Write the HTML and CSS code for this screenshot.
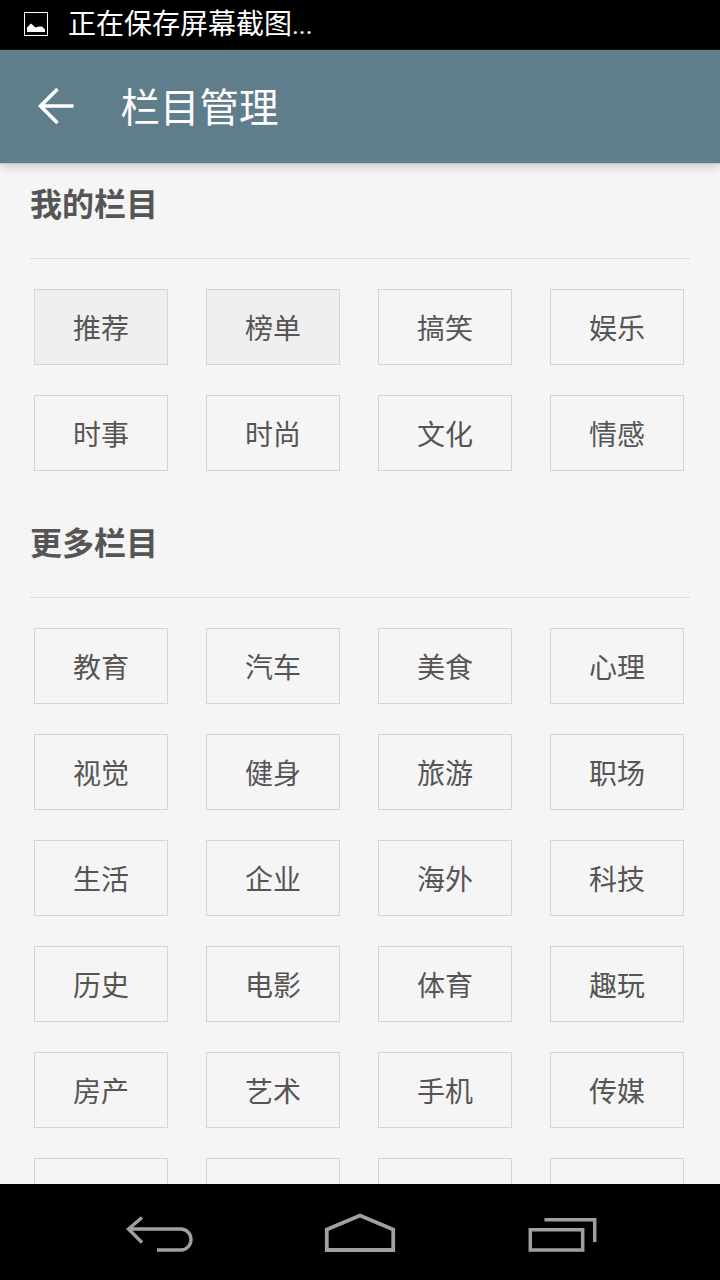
FILE: index.html
```html
<!DOCTYPE html>
<html lang="zh-CN">
<head>
<meta charset="utf-8">
<title>栏目管理</title>
<link rel="stylesheet" href="styles.css">
</head>
<body>
<div class="screen">
  <div class="status">
    <svg class="status-icon" width="24" height="24" viewBox="0 0 24 24"><path d="M.5.5h23v23H.5z" fill="none" stroke="#fff"/><path d="M3 20v-4.500l4-4 4.500 4 3-1 3.500 0 3 3V20z" fill="#fff"/></svg>
    <span class="status-text">正在保存屏幕截图<span class="dots">...</span></span>
  </div>
  <header class="appbar">
    <svg class="back" width="38" height="42" viewBox="0 0 38 42"><path d="M20.500 3 3.500 20 20.500 37M3.500 20h33" fill="none" stroke="#fff" stroke-width="3.600"/></svg>
    <h1 class="appbar-title">栏目管理</h1>
  </header>
  <main class="content">
    <section class="section">
      <h2 class="section-title">我的栏目</h2>
      <div class="grid">
        <div class="tile fixed">推荐</div><div class="tile fixed">榜单</div><div class="tile">搞笑</div><div class="tile">娱乐</div>
        <div class="tile">时事</div><div class="tile">时尚</div><div class="tile">文化</div><div class="tile">情感</div>
      </div>
    </section>
    <section class="section">
      <h2 class="section-title">更多栏目</h2>
      <div class="grid">
        <div class="tile">教育</div><div class="tile">汽车</div><div class="tile">美食</div><div class="tile">心理</div>
        <div class="tile">视觉</div><div class="tile">健身</div><div class="tile">旅游</div><div class="tile">职场</div>
        <div class="tile">生活</div><div class="tile">企业</div><div class="tile">海外</div><div class="tile">科技</div>
        <div class="tile">历史</div><div class="tile">电影</div><div class="tile">体育</div><div class="tile">趣玩</div>
        <div class="tile">房产</div><div class="tile">艺术</div><div class="tile">手机</div><div class="tile">传媒</div>
        <div class="tile"></div><div class="tile"></div><div class="tile"></div><div class="tile"></div>
      </div>
    </section>
  </main>
  <nav class="navbar">
    <svg width="72" height="56" viewBox="0 0 72 56"><path d="M19 13.500 5.500 25 19 38.500M5.500 25H58a10 10.500 0 0 1 0 21H34" fill="none" stroke="#a0a0a0" stroke-width="3.400"/></svg>
    <svg width="72" height="56" viewBox="0 0 72 56"><path d="M2.800 46V25.500L36 11.500l33.200 14V46z" fill="none" stroke="#a0a0a0" stroke-width="3.800"/></svg>
    <svg width="72" height="56" viewBox="0 0 72 56"><path d="M5.300 25.700h52.400V46H5.300zM19.500 15.700h50.200V38" fill="none" stroke="#a0a0a0" stroke-width="3.500"/></svg>
  </nav>
</div>
</body>
</html>
```

FILE: styles.css
```css
* { box-sizing: border-box; }
html, body { margin: 0; padding: 0; }
body { font-family: "Noto Sans CJK SC", "Roboto", sans-serif; background: #000; }
.screen { width: 720px; height: 1280px; display: flex; flex-direction: column; overflow: hidden; }

.status { height: 50px; flex: none; background: #000; color: #fff; display: flex; align-items: center; padding-left: 24px; }
.status-icon { flex: none; margin-top: -2px; }
.status-text { margin-left: 20px; font-size: 28px; line-height: 46px; margin-top: -4px; }
.dots { font-family: "Roboto", sans-serif; font-size: 26px; }

.appbar { height: 113px; flex: none; background: #607d8b; display: flex; align-items: center; padding-left: 37px; position: relative; z-index: 1; box-shadow: 0 0 1px #777, 0 3px 10px rgba(0, 0, 0, .2); }
.back { flex: none; }
.appbar-title { margin: -4px 0 0 45.500px; font-size: 39.500px; font-weight: 400; color: #fff; line-height: 56px; }

.content { flex: 1; min-height: 0; overflow: hidden; background: #f5f5f5; padding: 0 30px; }
.section { margin-bottom: 31px; }
.section-title { margin: 0; height: 96px; padding: 15px 0 0; border-bottom: 1px solid #ddd; font-size: 32px; line-height: 48px; font-weight: 700; color: #555; }
.grid { display: grid; grid-template-columns: repeat(4, 134px); column-gap: 38px; row-gap: 30px; padding: 30px 4px 0; }
.tile { height: 76px; border: 1px solid #d4d4d4; display: flex; align-items: center; justify-content: center; font-size: 28px; color: #555; }
.fixed { background: #efefef; }

.navbar { height: 96px; flex: none; background: #000; display: flex; align-items: center; justify-content: space-between; padding: 0 123px; }
```
